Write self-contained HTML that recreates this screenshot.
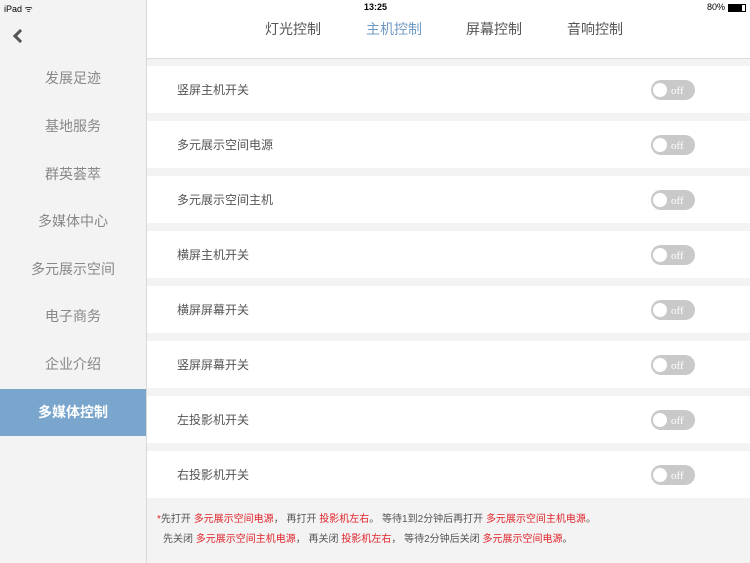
<!DOCTYPE html>
<html><head><meta charset="utf-8"><style>
*{margin:0;padding:0;box-sizing:border-box}
body{width:750px;height:563px;overflow:hidden;background:#f3f3f3;font-family:"Liberation Sans","Noto Sans CJK SC",sans-serif;position:relative}
.sb{position:absolute;left:0;top:0;width:147px;height:563px;background:#f3f3f3;border-right:1px solid #d8d8d8}
.status{position:absolute;top:0;left:0;width:750px;height:14px;font-size:9px;color:#000}
.item{position:absolute;left:0;width:146px;height:47px;line-height:47px;text-align:center;font-size:14px;color:#888}
.item.act{background:#7aa6cd;color:#fff;font-weight:bold}
.hdr{position:absolute;left:147px;top:0;width:603px;height:59px;background:#fff;border-bottom:1px solid #dcdcdc}
.tab{position:absolute;top:19px;font-size:14px;color:#555;transform:translateX(-50%)}
.row{position:absolute;left:147px;width:603px;height:47px;background:#fff}
.row span{position:absolute;left:30px;top:15px;font-size:12px;color:#555}
.tg{position:absolute;left:504px;top:14px;width:44px;height:20px;border-radius:10px;background:#c9c9c9}
.tg:before{content:"";position:absolute;left:2px;top:3px;width:14px;height:14px;border-radius:50%;background:#fff}
.tg:after{content:"off";position:absolute;left:20px;top:5px;font-family:"Liberation Serif",serif;font-size:11px;color:#fff}
.note{position:absolute;left:157px;font-size:10px;color:#555;white-space:nowrap}
.r{color:#e0242b}
</style></head><body>
<div class="sb">
<div style="position:absolute;left:15px;top:31px;width:10px;height:10px;border-left:3px solid #555;border-bottom:3px solid #555;transform:rotate(45deg)"></div>
<div class="item" style="top:55px">发展足迹</div>
<div class="item" style="top:103px">基地服务</div>
<div class="item" style="top:151px">群英荟萃</div>
<div class="item" style="top:198px">多媒体中心</div>
<div class="item" style="top:246px">多元展示空间</div>
<div class="item" style="top:293px">电子商务</div>
<div class="item" style="top:341px">企业介绍</div>
<div class="item act" style="top:389px">多媒体控制</div>
</div>
<div class="hdr">
<div class="tab" style="left:146px">灯光控制</div>
<div class="tab" style="left:247px;color:#6f9ac4">主机控制</div>
<div class="tab" style="left:347px">屏幕控制</div>
<div class="tab" style="left:448px">音响控制</div>
</div>
<div class="status"><span style="position:absolute;left:4px;top:2px">iPad ᯤ</span><span style="position:absolute;left:364px;top:2px;font-weight:bold">13:25</span><span style="position:absolute;left:707px;top:2px">80% <span style="display:inline-block;width:18px;height:8px;border:1px solid #000;vertical-align:middle;background:linear-gradient(90deg,#000 80%,#fff 80%)"></span></span></div>
<div class="row" style="top:66px"><span>竖屏主机开关</span><div class="tg"></div></div>
<div class="row" style="top:121px"><span>多元展示空间电源</span><div class="tg"></div></div>
<div class="row" style="top:176px"><span>多元展示空间主机</span><div class="tg"></div></div>
<div class="row" style="top:231px"><span>横屏主机开关</span><div class="tg"></div></div>
<div class="row" style="top:286px"><span>横屏屏幕开关</span><div class="tg"></div></div>
<div class="row" style="top:341px"><span>竖屏屏幕开关</span><div class="tg"></div></div>
<div class="row" style="top:396px"><span>左投影机开关</span><div class="tg"></div></div>
<div class="row" style="top:451px"><span>右投影机开关</span><div class="tg"></div></div>
<div class="note" style="top:510px"><span class="r">*</span>先打开 <span class="r">多元展示空间电源</span>， 再打开 <span class="r">投影机左右</span>。 等待1到2分钟后再打开 <span class="r">多元展示空间主机电源</span>。</div>
<div class="note" style="top:530px;left:163px">先关闭 <span class="r">多元展示空间主机电源</span>， 再关闭 <span class="r">投影机左右</span>， 等待2分钟后关闭 <span class="r">多元展示空间电源</span>。</div>
</body></html>
